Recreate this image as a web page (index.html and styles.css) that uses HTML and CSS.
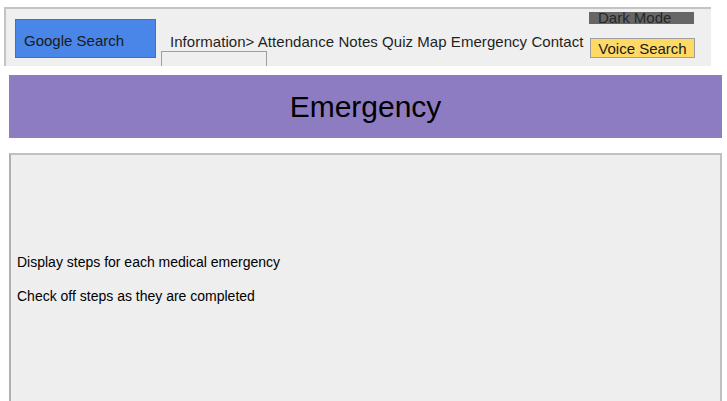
FILE: index.html
```html
<!DOCTYPE html>
<html>
<head>
<meta charset="utf-8">
<link rel="stylesheet" href="styles.css">
</head>
<body>
<header class="topbar">
  <button class="google-btn">Google Search</button>
  <div class="nav-col">
    <nav class="nav">Information&gt; Attendance Notes Quiz Map Emergency Contact</nav>
    <div class="empty-box"></div>
  </div>
  <div class="right-col">
    <button class="dark-btn">Dark Mode</button>
    <button class="voice-btn">Voice Search</button>
  </div>
</header>
<section class="title-bar">
  <h1>Emergency</h1>
</section>
<main class="content">
  <p>Display steps for each medical emergency</p>
  <p>Check off steps as they are completed</p>
</main>
</body>
</html>
```
FILE: styles.css
```css
* { box-sizing: border-box; }
body {
  margin: 0;
  font-family: "Liberation Sans", Arial, sans-serif;
  background: #ffffff;
  color: #000;
}
.topbar {
  margin: 7px 0 0 4px;
  width: 707px;
  height: 59px;
  background: #efefef;
  border-top: 2px solid #c4c4c4;
  border-left: 2px solid #c4c4c4;
  display: flex;
  align-items: flex-start;
  overflow: hidden;
  padding: 10px 0 0 9px;
}
.google-btn {
  width: 141px;
  height: 39px;
  background: #4a86e8;
  border: 1px solid #6b6b6b;
  font-family: inherit;
  font-size: 15px;
  color: #1a1a1a;
  text-align: left;
  padding: 4px 0 0 8px;
  margin: 0;
}
.nav-col {
  display: flex;
  flex-direction: column;
  margin-left: 5px;
  width: 424px;
}
.nav {
  font-size: 15px;
  color: #1f1f1f;
  margin: 14px 0 0 9px;
  line-height: 17px;
  white-space: nowrap;
  letter-spacing: 0.05px;
}
.empty-box {
  width: 106px;
  height: 30px;
  border: 1px solid #9e9e9e;
  margin-top: 1px;
  background: #efefef;
}
.right-col {
  display: flex;
  flex-direction: column;
  margin-left: 4px;
  margin-top: -7px;
}
.dark-btn {
  width: 105px;
  height: 12px;
  background: #666666;
  border: 0;
  padding: 0 0 0 9px;
  margin: 0;
  font-family: inherit;
  font-size: 15px;
  line-height: 12px;
  color: #262626;
  text-align: left;
  overflow: visible;
}
.voice-btn {
  width: 105px;
  height: 20px;
  margin: 14px 0 0 1px;
  padding: 0;
  background: #ffd966;
  border: 1px solid #9e9e9e;
  font-family: inherit;
  font-size: 15px;
  color: #1a1a1a;
}
.title-bar {
  margin: 9px 0 0 9px;
  width: 713px;
  height: 63px;
  background: #8e7cc3;
  border: 1px solid #8a8a8a;
  display: flex;
  align-items: center;
  justify-content: center;
}
.title-bar h1 {
  margin: 0;
  font-weight: normal;
  font-size: 30px;
  color: #000;
  padding-top: 1px;
}
.content {
  margin: 15px 0 0 9px;
  width: 713px;
  height: 260px;
  background: #eeeeee;
  border: 2px solid #c0c0c0;
  border-left-color: #b0b0b0;
  padding: 99px 0 0 6px;
}
.content p {
  margin: 0 0 18px;
  font-size: 14px;
  line-height: 16px;
}
```
